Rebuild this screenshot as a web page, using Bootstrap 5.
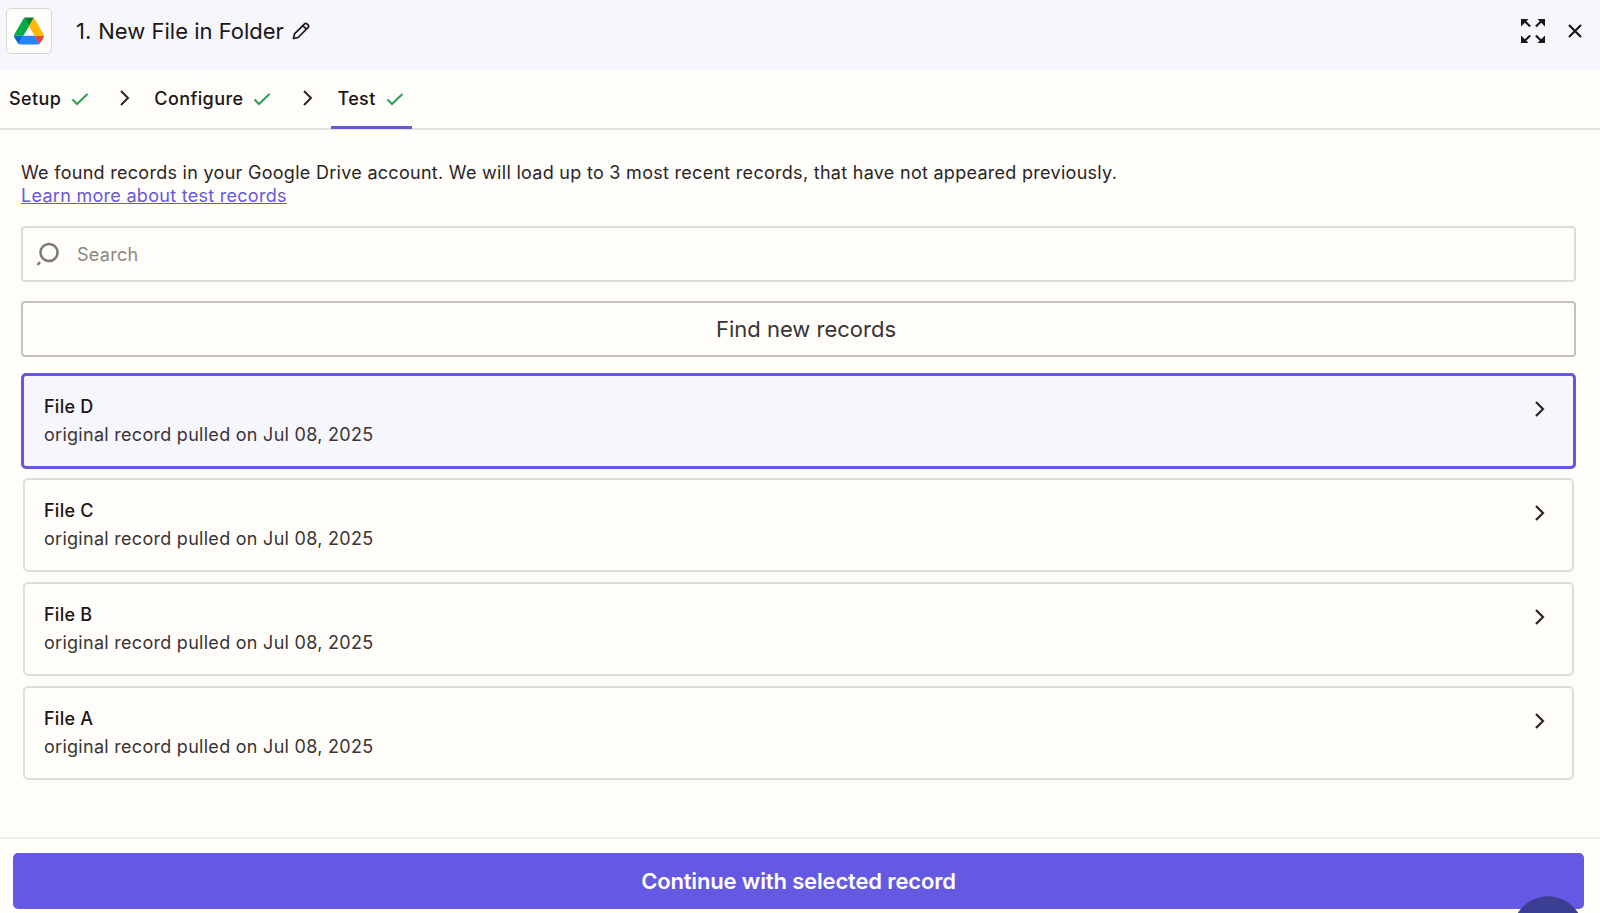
<!DOCTYPE html>
<html lang="en">
<head>
<meta charset="utf-8">
<title>New File in Folder</title>
<link href="https://cdn.jsdelivr.net/npm/bootstrap@5.3.0/dist/css/bootstrap.min.css" rel="stylesheet">
<style>
html,body{height:913px;overflow:hidden}
body{background:#fffdf9;color:#201515;font-family:Inter,"Liberation Sans",sans-serif;position:relative}
.zs-head{height:70px;background:#f6f6fd;padding:8px 18px 16px 6px}
.zs-tile{width:46px;height:46px;border:1.5px solid #d7d5d0;border-radius:5px;background:#fffdf9}
.zs-title{font-size:22px;line-height:46px;margin-left:24px;margin-top:-1px;height:46px}
.zs-num{margin-right:7px}
.zs-pen{margin-left:7px}
.zs-tools{margin-top:-1px;gap:22px}
.zs-tabs{height:60px;border-bottom:2px solid #e3e1dc;padding-left:9px}
.zs-tab{font-size:18px;font-weight:500;height:58px;line-height:58px;white-space:nowrap;letter-spacing:.4px}
.zs-tabact{height:59px;border-bottom:3px solid #6558dc;padding:1px 8px 0 6px;margin-left:17px;margin-bottom:-1px}
.zs-tabgo{margin-left:23px}
.zs-tabgo svg,.zs-tabact svg,.zs-tabfirst svg{margin-left:10px}
.zs-sep{margin:19px 0 0 30px}
.zs-sep2{margin:19px 0 0 31px}
.zs-main{padding:31px 24px 0 21px}
.zs-intro{font-size:18px;letter-spacing:.285px;line-height:23px;margin-bottom:19px;color:#2b2525}
.zs-intro a{color:#6558dc}
.zs-search{height:56px;border:2px solid #dedcd6;border-radius:4px;padding-left:12px;margin-bottom:19px}
.zs-search input{border:0;outline:0;background:transparent;font-size:18px;letter-spacing:.28px;color:#201515;flex:1;margin-left:14px;font-family:inherit}
.zs-search input::placeholder{color:#8a8682;opacity:1}
.zs-find{height:56px;width:100%;background:transparent;border:2px solid #c5c2bc;border-radius:4px;font-size:22px;color:#3a3434;margin-bottom:16px;display:block;padding:0 0 0 15px}
.zs-rec{height:94px;margin:0 2px 10px;border:2px solid #e0ded8;border-radius:5px;padding:17px 26px 0 19px}
.zs-rec.zs-sel{height:96px;margin:0 0 9px;border:3px solid #6558dc;background:#f6f6fd;padding:17px 27px 0 20px}
.zs-rec svg{margin-top:7px}
.zs-name{font-size:18px;font-weight:500;line-height:28px;color:#201515;letter-spacing:.25px}
.zs-sub{font-size:18px;line-height:28px;color:#3a3434;letter-spacing:.28px}
.zs-foot{position:absolute;left:0;right:0;top:837px;border-top:2px solid #f0eeea;padding:14px 16px 0 13px}
.zs-go{height:56px;background:#6558e3;border:0;border-radius:5px;color:#fff;font-size:22px;font-weight:600;letter-spacing:-.15px;width:100%;display:block;padding:0}
.zs-blob{position:absolute;left:1512px;top:896px;width:72px;height:17px;background:radial-gradient(circle 36px at 36px 36px,#3a3f94 98%,transparent 100%)}
</style>
</head>
<body>
<header class="zs-head d-flex align-items-center">
  <div class="zs-tile d-flex align-items-center justify-content-center flex-shrink-0">
    <svg width="30" height="28" viewBox="0 0 87.3 78" aria-label="Google Drive">
      <path d="m6.6 66.85 3.85 6.65c.8 1.4 1.95 2.5 3.3 3.3l13.75-23.8h-27.5c0 1.55.4 3.1 1.2 4.5z" fill="#0066da"/>
      <path d="m43.65 25-13.75-23.8c-1.35.8-2.5 1.9-3.3 3.3l-25.4 44a9.06 9.06 0 0 0-1.2 4.5h27.5z" fill="#00ac47"/>
      <path d="m73.55 76.8c1.35-.8 2.5-1.9 3.3-3.3l1.6-2.75 7.65-13.25c.8-1.4 1.2-2.95 1.2-4.5h-27.5l5.85 11.5z" fill="#ea4335"/>
      <path d="m43.65 25 13.75-23.8c-1.35-.8-2.9-1.2-4.5-1.2h-18.5c-1.6 0-3.15.45-4.5 1.2z" fill="#00832d"/>
      <path d="m59.8 53h-32.3l-13.75 23.8c1.35.8 2.9 1.2 4.5 1.2h50.8c1.6 0 3.15-.45 4.5-1.2z" fill="#2684fc"/>
      <path d="m73.4 26.5-12.7-22c-.8-1.4-1.95-2.5-3.3-3.3l-13.75 23.8 16.15 28h27.45c0-1.55-.4-3.1-1.2-4.5z" fill="#ffba00"/>
    </svg>
  </div>
  <div class="zs-title d-flex align-items-center">
    <span class="zs-num">1.</span><span>New File in Folder</span>
    <svg class="zs-pen" width="20" height="20" viewBox="0 0 20 20" fill="none" stroke="#201515" stroke-width="1.7" stroke-linejoin="round"><path d="M2.5 17.5l1-4.6L13.6 2.8a1.6 1.6 0 0 1 2.3 0l1.3 1.3a1.6 1.600 0 0 1 0 2.3L7.1 16.5z"/><path d="M11.8 4.6l3.600 3.600"/></svg>
  </div>
  <div class="zs-tools ms-auto d-flex align-items-center">
    <svg width="26" height="26" viewBox="0 0 26 26" fill="#201515"><path d="M1 1h7.500L6.300 3.200l4.600 4.600-1.500 1.500-4.600-4.600L2.600 6.900 1 8.500z"/><path d="M25 1h-7.500l2.200 2.200-4.600 4.600 1.500 1.500 4.600-4.600 2.200 2.200L25 8.500z"/><path d="M1 25h7.500l-2.200-2.200 4.600-4.600-1.500-1.500-4.600 4.600-2.200-2.200L1 17.500z"/><path d="M25 25h-7.500l2.200-2.200-4.600-4.600 1.500-1.500 4.600 4.600 2.200-2.200L25 17.500z"/></svg>
    <svg width="14" height="14" viewBox="0 0 14 14" fill="none" stroke="#201515" stroke-width="2.200"><path d="M1 1l12 12M13 1L1 13"/></svg>
  </div>
</header>

<nav class="zs-tabs d-flex align-items-start">
  <div class="zs-tab zs-tabfirst d-flex align-items-center">Setup
    <svg width="18" height="14" viewBox="0 0 18 14" fill="none" stroke="#2f9e58" stroke-width="2"><path d="M1.500 7.500l4.500 4.500L16.500 2"/></svg></div>
  <svg class="zs-sep" width="12" height="18" viewBox="0 0 12 18" fill="none" stroke="#2b2525" stroke-width="2"><path d="M2 2l7 7-7 7"/></svg>
  <div class="zs-tab zs-tabgo d-flex align-items-center">Configure
    <svg width="18" height="14" viewBox="0 0 18 14" fill="none" stroke="#2f9e58" stroke-width="2"><path d="M1.500 7.500l4.500 4.500L16.500 2"/></svg></div>
  <svg class="zs-sep2" width="12" height="18" viewBox="0 0 12 18" fill="none" stroke="#2b2525" stroke-width="2"><path d="M2 2l7 7-7 7"/></svg>
  <div class="zs-tab zs-tabact d-flex align-items-center">Test
    <svg width="18" height="14" viewBox="0 0 18 14" fill="none" stroke="#2f9e58" stroke-width="2"><path d="M1.500 7.500l4.500 4.500L16.500 2"/></svg></div>
</nav>

<main class="zs-main">
  <p class="zs-intro">We found records in your Google Drive account. We will load up to 3 most recent records, that have not appeared previously.<br><a href="#">Learn more about test records</a></p>
  <div class="zs-search d-flex align-items-center">
    <svg width="26" height="26" viewBox="0 0 26 26" fill="none" stroke="#7c7874" stroke-width="2.500"><circle cx="14" cy="11.500" r="8.500"/><path d="M5 21L2.500 24"/></svg>
    <input type="text" placeholder="Search">
  </div>
  <button class="zs-find" type="button">Find new records</button>
  <div class="zs-rec zs-sel d-flex justify-content-between">
    <div><div class="zs-name">File D</div><div class="zs-sub">original record pulled on Jul 08, 2025</div></div>
    <svg width="12" height="18" viewBox="0 0 12 18" fill="none" stroke="#2b2525" stroke-width="2.200"><path d="M2 2l7 7-7 7"/></svg>
  </div>
  <div class="zs-rec d-flex justify-content-between">
    <div><div class="zs-name">File C</div><div class="zs-sub">original record pulled on Jul 08, 2025</div></div>
    <svg width="12" height="18" viewBox="0 0 12 18" fill="none" stroke="#2b2525" stroke-width="2.200"><path d="M2 2l7 7-7 7"/></svg>
  </div>
  <div class="zs-rec d-flex justify-content-between">
    <div><div class="zs-name">File B</div><div class="zs-sub">original record pulled on Jul 08, 2025</div></div>
    <svg width="12" height="18" viewBox="0 0 12 18" fill="none" stroke="#2b2525" stroke-width="2.200"><path d="M2 2l7 7-7 7"/></svg>
  </div>
  <div class="zs-rec d-flex justify-content-between">
    <div><div class="zs-name">File A</div><div class="zs-sub">original record pulled on Jul 08, 2025</div></div>
    <svg width="12" height="18" viewBox="0 0 12 18" fill="none" stroke="#2b2525" stroke-width="2.200"><path d="M2 2l7 7-7 7"/></svg>
  </div>
</main>

<footer class="zs-foot"><button class="zs-go" type="button">Continue with selected record</button></footer>
<div class="zs-blob"></div>
<script src="https://cdn.jsdelivr.net/npm/bootstrap@5.3.0/dist/js/bootstrap.bundle.min.js"></script>
</body>
</html>
